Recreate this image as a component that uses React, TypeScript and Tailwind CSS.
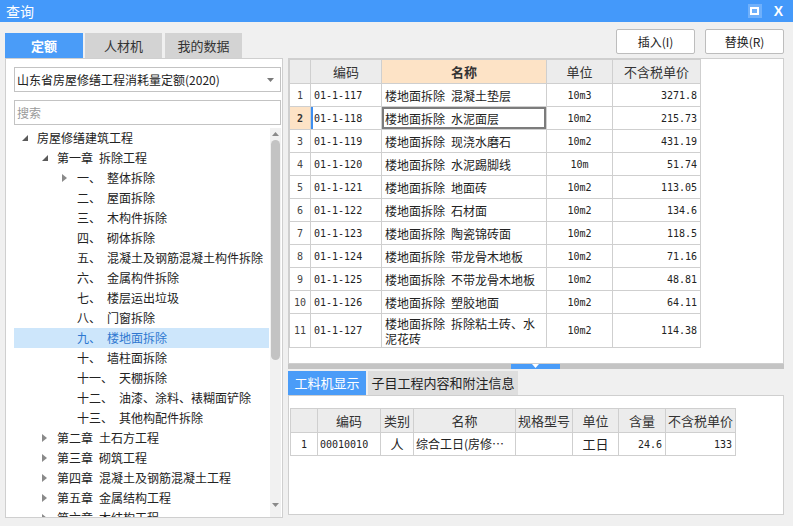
import React from "react";

const FONT = { fontFamily: '"Noto Sans CJK SC", "Noto Sans", sans-serif' };
const MONO = { fontFamily: '"DejaVu Sans Mono", "Liberation Mono", monospace' };

type TreeRow = { lvl: number; exp?: "open" | "closed"; num?: string; text: string; sel?: boolean };

const tree: TreeRow[] = [
  { lvl: 0, exp: "open", text: "房屋修缮建筑工程" },
  { lvl: 1, exp: "open", num: "第一章", text: "拆除工程" },
  { lvl: 2, exp: "closed", num: "一、", text: "整体拆除" },
  { lvl: 2, num: "二、", text: "屋面拆除" },
  { lvl: 2, num: "三、", text: "木构件拆除" },
  { lvl: 2, num: "四、", text: "砌体拆除" },
  { lvl: 2, num: "五、", text: "混凝土及钢筋混凝土构件拆除" },
  { lvl: 2, num: "六、", text: "金属构件拆除" },
  { lvl: 2, num: "七、", text: "楼层运出垃圾" },
  { lvl: 2, num: "八、", text: "门窗拆除" },
  { lvl: 2, num: "九、", text: "楼地面拆除", sel: true },
  { lvl: 2, num: "十、", text: "墙柱面拆除" },
  { lvl: 2, num: "十一、", text: "天棚拆除" },
  { lvl: 2, num: "十二、", text: "油漆、涂料、裱糊面铲除" },
  { lvl: 2, num: "十三、", text: "其他构配件拆除" },
  { lvl: 1, exp: "closed", num: "第二章", text: "土石方工程" },
  { lvl: 1, exp: "closed", num: "第三章", text: "砌筑工程" },
  { lvl: 1, exp: "closed", num: "第四章", text: "混凝土及钢筋混凝土工程" },
  { lvl: 1, exp: "closed", num: "第五章", text: "金属结构工程" },
  { lvl: 1, exp: "closed", num: "第六章", text: "木结构工程" },
];

const rows = [
  ["1", "01-1-117", "混凝土垫层", "10m3", "3271.8"],
  ["2", "01-1-118", "水泥面层", "10m2", "215.73"],
  ["3", "01-1-119", "现浇水磨石", "10m2", "431.19"],
  ["4", "01-1-120", "水泥踢脚线", "10m", "51.74"],
  ["5", "01-1-121", "地面砖", "10m2", "113.05"],
  ["6", "01-1-122", "石材面", "10m2", "134.6"],
  ["7", "01-1-123", "陶瓷锦砖面", "10m2", "118.5"],
  ["8", "01-1-124", "带龙骨木地板", "10m2", "71.16"],
  ["9", "01-1-125", "不带龙骨木地板", "10m2", "48.81"],
  ["10", "01-1-126", "塑胶地面", "10m2", "64.11"],
  ["11", "01-1-127", "拆除粘土砖、水泥花砖", "10m2", "114.38"],
];

function TriOpen() {
  return (
    <svg width="7" height="7" viewBox="0 0 7 7">
      <polygon points="6,0 6,6 0,6" fill="#5a5a5a" />
    </svg>
  );
}
function TriClosed() {
  return (
    <svg width="5" height="8" viewBox="0 0 5 8">
      <polygon points="0,0 5,4 0,8" fill="#8a8a8a" />
    </svg>
  );
}

export default function App() {
  return (
    <div className="w-[793px] h-[526px] bg-[#f0f0f0] flex flex-col overflow-hidden text-[12px] text-[#222]" style={FONT}>
      {/* Title bar */}
      <div className="h-[22px] bg-[#4499fa] flex items-center justify-between pl-[6px] pr-[10px] text-white">
        <span className="text-[14px] leading-none">查询</span>
        <div className="flex items-center gap-[12px]">
          <div className="w-[14px] h-[14px] bg-[#6fb0fb] flex items-center justify-center">
            <div className="w-[9px] h-[8px] border-[2px] border-white" />
          </div>
          <span className="text-[14px] font-bold leading-none" style={{ fontFamily: '"Liberation Sans", sans-serif' }}>X</span>
        </div>
      </div>

      <div className="flex flex-1 min-h-0">
        {/* Left column */}
        <div className="w-[288px] pl-[5px] pt-[11px] flex flex-col">
          <div className="flex h-[25px] text-[13px]">
            <div className="w-[78px] bg-[#4a9cf8] text-white flex items-center justify-center font-bold">定额</div>
            <div className="w-[77px] ml-[2px] bg-[#d3d3d3] text-[#333] flex items-center justify-center">人材机</div>
            <div className="w-[77px] ml-[3px] bg-[#d3d3d3] text-[#333] flex items-center justify-center">我的数据</div>
          </div>
          <div className="w-[278px] h-[460px] bg-white border border-[#cfcfcf] flex flex-col pl-[8px] pr-[1px] pt-[8px] overflow-hidden">
            <div className="h-[25px] w-[267px] border border-[#c3c3c3] flex items-center justify-between pl-[2px] pr-[6px]">
              <span className="text-[12px]">山东省房屋修缮工程消耗量定额(2020)</span>
              <svg width="7" height="4" viewBox="0 0 7 4"><polygon points="0,0 7,0 3.5,4" fill="#7a7a7a" /></svg>
            </div>
            <div className="h-[25px] w-[267px] mt-[8px] border border-[#c3c3c3] flex items-center pl-[2px] text-[#9a9a9a]">搜索</div>
            <div className="flex flex-1 mt-[3px] min-h-0">
              <div className="w-[255px] flex flex-col">
                {tree.map((r, i) => (
                  <div
                    key={i}
                    className={"h-[20px] shrink-0 flex items-center " + (r.sel ? "bg-[#cde6fb] text-[#2f78d0]" : "")}
                    style={{ paddingLeft: 8 + 20 * r.lvl }}
                  >
                    <div className="w-[15px] flex items-center">
                      {r.exp === "open" ? <TriOpen /> : r.exp === "closed" ? <TriClosed /> : null}
                    </div>
                    {r.num ? (
                      <>
                        <span>{r.num}</span>
                        <span className="ml-[6px]">{r.text}</span>
                      </>
                    ) : (
                      <span>{r.text}</span>
                    )}
                  </div>
                ))}
              </div>
              <div className="w-[11px] ml-[1px] bg-[#f1f1f1] flex flex-col items-center">
                <div className="h-[12px] flex items-center justify-center">
                  <svg width="7" height="4" viewBox="0 0 7 4"><polygon points="3.5,0 7,4 0,4" fill="#8a8a8a" /></svg>
                </div>
                <div className="w-[9px] h-[220px] bg-[#c3c3c3] rounded-full" />
                <div className="flex-1" />
                <div className="h-[14px] flex items-start justify-center">
                  <svg width="7" height="4" viewBox="0 0 7 4"><polygon points="0,0 7,0 3.5,4" fill="#8a8a8a" /></svg>
                </div>
              </div>
            </div>
          </div>
        </div>

        {/* Right column */}
        <div className="flex-1 flex flex-col">
          <div className="flex justify-end gap-[10px] pr-[9px] pt-[7px] h-[32px]">
            <button className="w-[79px] h-[25px] bg-white border border-[#bdbdbd] rounded-[2px] text-[12px] text-[#222]">插入(I)</button>
            <button className="w-[79px] h-[25px] bg-white border border-[#bdbdbd] rounded-[2px] text-[12px] text-[#222]">替换(R)</button>
          </div>
          <div className="flex">
            <div className="w-[496px] flex flex-col">
              {/* Top panel */}
              <div className="h-[306px] bg-white border border-[#cfcfcf] mt-[4px] overflow-hidden">
                <table className="table-fixed border-collapse w-[411px]">
                  <colgroup>
                    <col className="w-[21px]" />
                    <col className="w-[71px]" />
                    <col className="w-[165px]" />
                    <col className="w-[66px]" />
                    <col className="w-[88px]" />
                  </colgroup>
                  <thead>
                    <tr className="h-[24px] text-[13px] text-[#333]">
                      <th className="bg-[#ececec] border border-[#cfcfcf] font-normal"></th>
                      <th className="bg-[#ececec] border border-[#cfcfcf] font-normal">编码</th>
                      <th className="bg-[#fde3c6] border border-[#cfcfcf] font-bold">名称</th>
                      <th className="bg-[#ececec] border border-[#cfcfcf] font-normal">单位</th>
                      <th className="bg-[#ececec] border border-[#cfcfcf] font-normal">不含税单价</th>
                    </tr>
                  </thead>
                  <tbody>
                    {rows.map((r, i) => {
                      const sel = i === 1;
                      const tall = i === 10;
                      return (
                        <tr key={i} className={tall ? "h-[34px]" : "h-[23px]"}>
                          <td
                            className={"border border-[#cfcfcf] text-center text-[10px] p-0 " + (sel ? "bg-[#fde3c6] font-bold text-[#333]" : "text-[#444]")}
                            style={MONO}
                          >
                            {r[0]}
                          </td>
                          <td
                            className={"border border-[#cfcfcf] pl-[3px] text-[10px] " + (sel ? "shadow-[inset_2px_0_0_#3d8ef0]" : "")}
                            style={MONO}
                          >
                            {r[1]}
                          </td>
                          <td className={"border border-[#cfcfcf] pl-[3px] leading-[15px] " + (sel ? "shadow-[inset_0_0_0_2px_#7c7c7c]" : "")}>
                            楼地面拆除<span className="inline-block w-[6px]" />{r[2]}
                          </td>
                          <td className="border border-[#cfcfcf] text-center text-[10px]" style={MONO}>
                            {r[3]}
                          </td>
                          <td className="border border-[#cfcfcf] text-right pr-[3px] text-[10px]" style={MONO}>
                            {r[4]}
                          </td>
                        </tr>
                      );
                    })}
                  </tbody>
                </table>
              </div>

              {/* Splitter */}
              <div className="h-[5px] bg-[#c4c4c4] flex">
                <div className="w-[223px]" />
                <div className="w-[49px] bg-[#4a9cf8] flex justify-center">
                  <svg width="7" height="4" viewBox="0 0 7 4"><polygon points="0,0 7,0 3.5,4" fill="#ffffff" /></svg>
                </div>
              </div>

              {/* Bottom tabs */}
              <div className="flex h-[24px] mt-[2px] text-[13px]">
                <div className="w-[78px] bg-[#4a9cf8] text-white flex items-center justify-center">工料机显示</div>
                <div className="w-[150px] ml-[2px] bg-[#dedede] text-[#222] flex items-center justify-center">子目工程内容和附注信息</div>
              </div>

              {/* Bottom panel */}
              <div className="h-[120px] bg-white border border-[#cfcfcf] pt-[12px] pl-[1px] overflow-hidden">
                <table className="table-fixed border-collapse w-[445px]">
                  <colgroup>
                    <col className="w-[27px]" />
                    <col className="w-[63px]" />
                    <col className="w-[33px]" />
                    <col className="w-[102px]" />
                    <col className="w-[57px]" />
                    <col className="w-[46px]" />
                    <col className="w-[47px]" />
                    <col className="w-[70px]" />
                  </colgroup>
                  <thead>
                    <tr className="h-[24px] text-[13px] text-[#333]">
                      <th className="bg-[#ececec] border border-[#cfcfcf] font-normal"></th>
                      <th className="bg-[#ececec] border border-[#cfcfcf] font-normal">编码</th>
                      <th className="bg-[#ececec] border border-[#cfcfcf] font-normal">类别</th>
                      <th className="bg-[#ececec] border border-[#cfcfcf] font-normal">名称</th>
                      <th className="bg-[#ececec] border border-[#cfcfcf] font-normal">规格型号</th>
                      <th className="bg-[#ececec] border border-[#cfcfcf] font-normal">单位</th>
                      <th className="bg-[#ececec] border border-[#cfcfcf] font-normal">含量</th>
                      <th className="bg-[#ececec] border border-[#cfcfcf] font-normal">不含税单价</th>
                    </tr>
                  </thead>
                  <tbody>
                    <tr className="h-[23px]">
                      <td className="border border-[#cfcfcf] text-center text-[10px]" style={MONO}>1</td>
                      <td className="border border-[#cfcfcf] pl-[2px] text-[10px]" style={MONO}>00010010</td>
                      <td className="border border-[#cfcfcf] text-center text-[13px]">人</td>
                      <td className="border border-[#cfcfcf] pl-[2px] whitespace-nowrap overflow-hidden">综合工日(房修…</td>
                      <td className="border border-[#cfcfcf]"></td>
                      <td className="border border-[#cfcfcf] text-center text-[13px]">工日</td>
                      <td className="border border-[#cfcfcf] text-right pr-[3px] text-[10px]" style={MONO}>24.6</td>
                      <td className="border border-[#cfcfcf] text-right pr-[3px] text-[10px]" style={MONO}>133</td>
                    </tr>
                  </tbody>
                </table>
              </div>
            </div>
            <div className="flex-1" />
          </div>
        </div>
      </div>
    </div>
  );
}
